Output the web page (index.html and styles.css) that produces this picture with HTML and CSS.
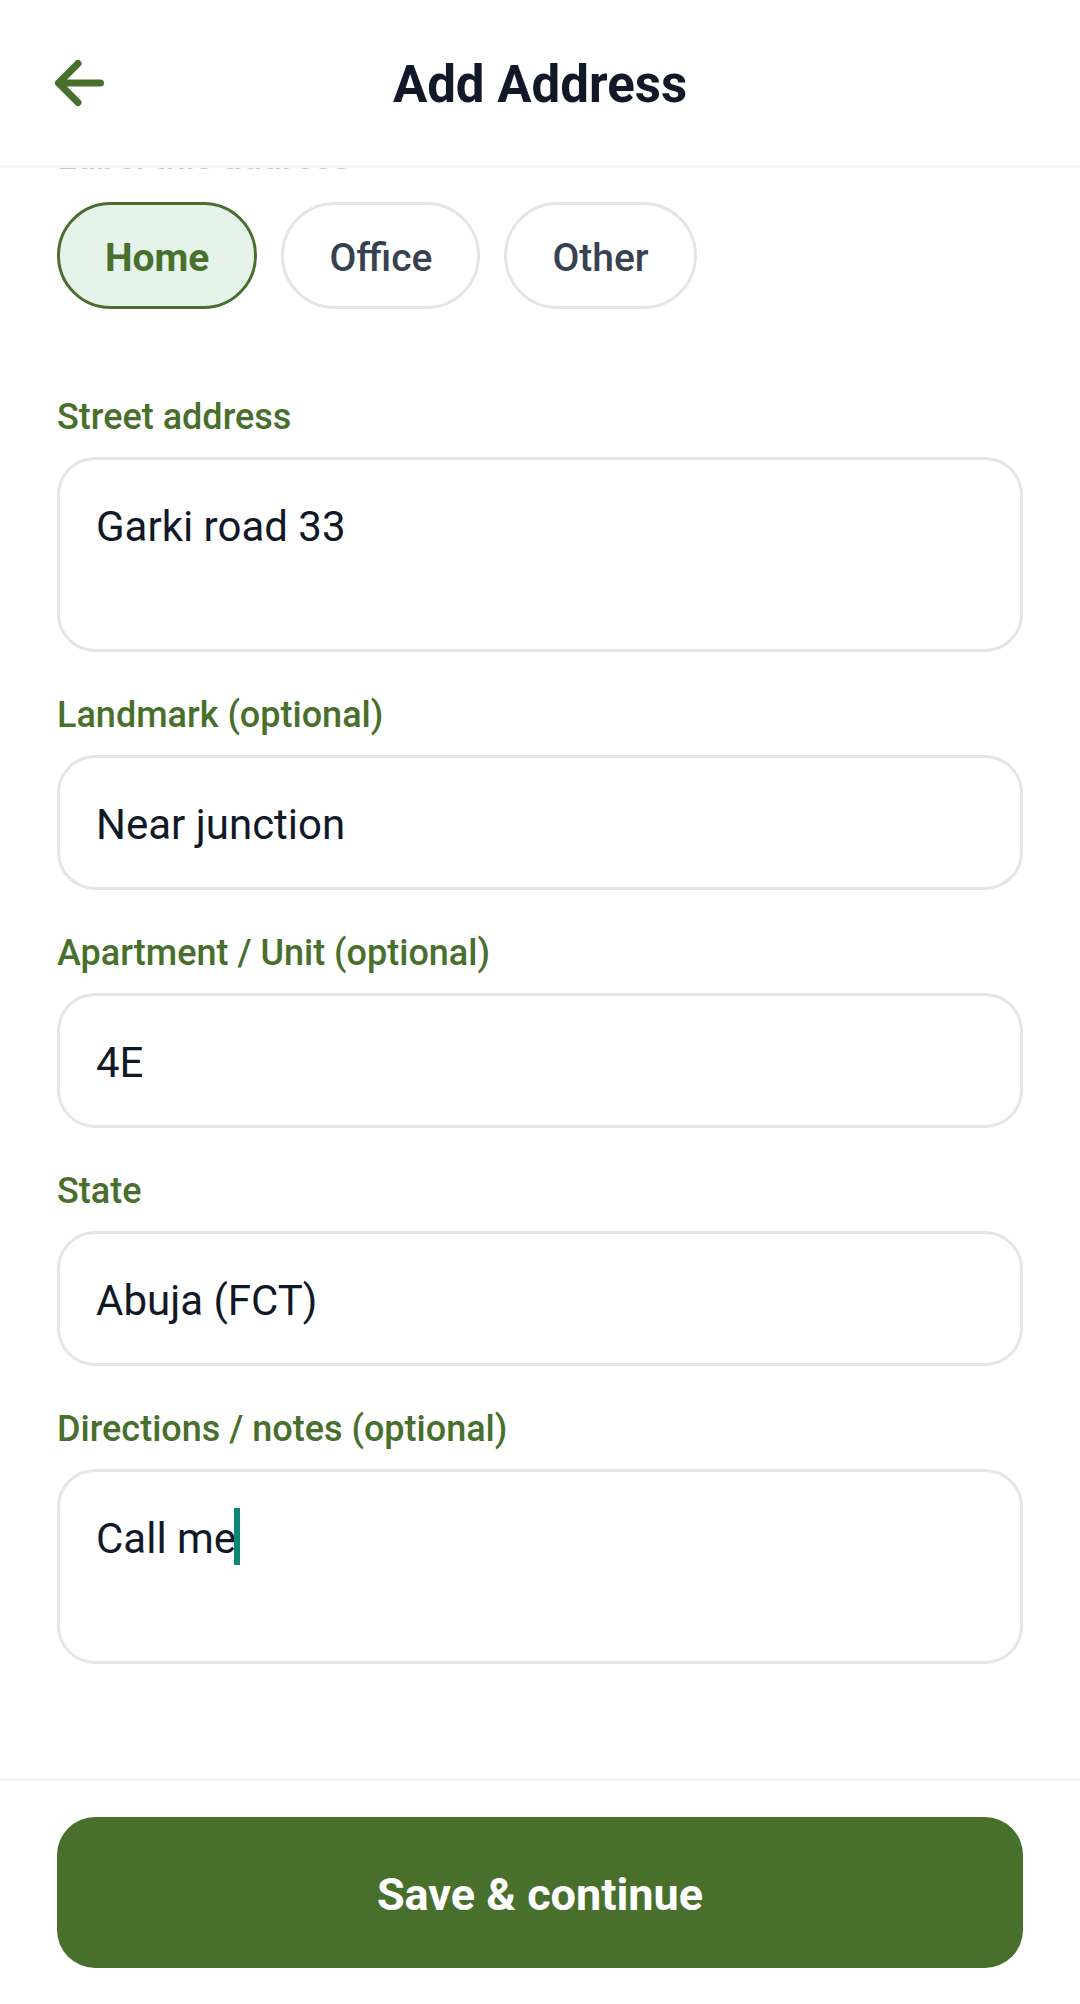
FILE: index.html
```html
<!DOCTYPE html>
<html lang="en">
<head>
<meta charset="utf-8">
<meta name="viewport" content="width=device-width, initial-scale=1">
<title>Add Address</title>
<link rel="stylesheet" href="styles.css">
</head>
<body>
<form class="screen">
  <header class="header">
    <button class="back" type="button" aria-label="Back">
      <svg class="back-icon" viewBox="0 0 52 48" fill="none" stroke="currentColor" stroke-width="7" stroke-linecap="round" stroke-linejoin="round" aria-hidden="true">
        <path d="M24 4.500 4.500 24 24 43.500M4.500 24H46.500"/>
      </svg>
    </button>
    <h1 class="title">Add Address</h1>
  </header>

  <main class="content">
    <h2 class="section-label">Label this address</h2>
    <div class="chips">
      <button class="chip chip-selected" type="button" aria-pressed="true">Home</button>
      <button class="chip" type="button" aria-pressed="false">Office</button>
      <button class="chip" type="button" aria-pressed="false">Other</button>
    </div>

    <div class="fields">
      <div class="field">
        <label class="label" for="street">Street address</label>
        <textarea class="control control-tall" id="street">Garki road 33</textarea>
      </div>
      <div class="field">
        <label class="label" for="landmark">Landmark (optional)</label>
        <input class="control" id="landmark" type="text" value="Near junction">
      </div>
      <div class="field">
        <label class="label" for="unit">Apartment / Unit (optional)</label>
        <input class="control" id="unit" type="text" value="4E">
      </div>
      <div class="field">
        <label class="label" for="state">State</label>
        <input class="control" id="state" type="text" value="Abuja (FCT)">
      </div>
      <div class="field">
        <label class="label" for="notes">Directions / notes (optional)</label>
        <div class="editing">
          <textarea class="control control-tall" id="notes">Call me</textarea>
          <span class="caret" aria-hidden="true"></span>
        </div>
      </div>
    </div>
  </main>

  <footer class="footer">
    <button class="save" type="submit">Save &amp; continue</button>
  </footer>
</form>
</body>
</html>
```
FILE: styles.css
```css
* {
  box-sizing: border-box;
}

body {
  margin: 0;
  background: #fff;
  color: #111827;
  font-family: Roboto, "Liberation Sans", sans-serif;
}

button,
input,
textarea {
  margin: 0;
  font: inherit;
  color: inherit;
}

.screen {
  display: flex;
  flex-direction: column;
  height: 100vh;
}

/* Header */
.header {
  display: grid;
  grid-template-columns: 52px 1fr 52px;
  align-items: center;
  padding: 55px 54px 50px;
  border-bottom: 3px solid #f3f4f4;
}

.back {
  display: flex;
  padding: 0 0 5px;
  border: 0;
  background: none;
  color: #48702c;
}

.back-icon {
  width: 52px;
  height: 48px;
}

.title {
  margin: 0;
  font-size: 51px;
  line-height: 60px;
  font-weight: 700;
  text-align: center;
}

.content {
  flex: 1;
  min-height: 0;
  overflow: hidden;
  padding: 0 57px;
}

.section-label {
  margin: -34px 0 22px;
  font-size: 36px;
  line-height: 46px;
  font-weight: 500;
  color: #c4c8cf;
}

.chips {
  display: flex;
  gap: 24px;
}

.chip {
  height: 107px;
  padding: 4px 45px 0;
  border: 3px solid #e5e5e5;
  border-radius: 54px;
  background: #fff;
  font-size: 39px;
  font-weight: 500;
  color: #374151;
}

.chip-selected {
  border-color: #48702c;
  background: #e6f3eb;
  font-weight: 700;
  color: #48702c;
}

.fields {
  display: flex;
  flex-direction: column;
  gap: 41px;
  margin-top: 86px;
}

.field {
  display: flex;
  flex-direction: column;
  gap: 17px;
}

.label {
  font-size: 36px;
  line-height: 45px;
  font-weight: 500;
  color: #48702c;
}

.control {
  display: block;
  width: 100%;
  height: 135px;
  padding: 3px 36px 0;
  border: 3px solid #e5e5e5;
  border-radius: 38px;
  outline: 0;
  background: #fff;
  font-size: 42px;
  line-height: 57px;
}

.control-tall {
  height: 195px;
  padding: 38px 36px;
  resize: none;
  overflow: hidden;
}

.editing {
  position: relative;
}

/* Text cursor drawn over the end of the note */
.caret {
  position: absolute;
  top: 39px;
  left: 177px;
  width: 6px;
  height: 57px;
  background: #0b8574;
}

/* Footer */
.footer {
  padding: 36px 57px;
  border-top: 3px solid #f3f4f4;
}

.save {
  width: 100%;
  height: 151px;
  padding: 3px 0 0;
  border: 0;
  border-radius: 38px;
  background: #48702c;
  font-size: 45px;
  font-weight: 700;
  color: #fff;
}
```
